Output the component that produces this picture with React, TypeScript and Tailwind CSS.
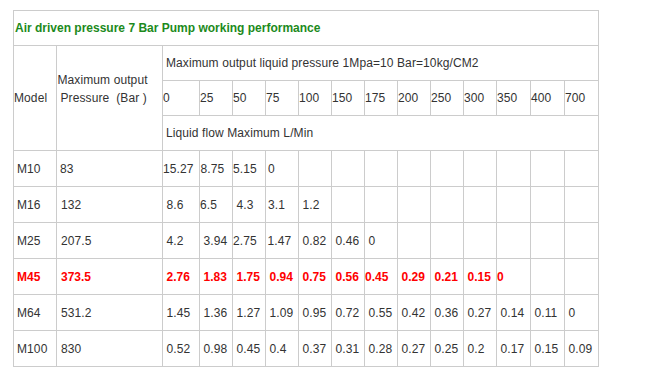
import React from "react";

type Cell = { t: string; p?: string };

const headNums = ["0", "25", "50", "75", "100", "150", "175", "200", "250", "300", "350", "400", "700"];

const rows: { model: string; pres: string; presPad: string; red?: boolean; vals: Cell[] }[] = [
  {
    model: "M10",
    pres: "83",
    presPad: "pl-[3px]",
    vals: [{ t: "15.27", p: "pl-0" }, { t: "8.75", p: "pl-[0.5px]" }, { t: "5.15", p: "pl-0" }, { t: "0", p: "pl-[2px]" }],
  },
  {
    model: "M16",
    pres: "132",
    presPad: "pl-[4px]",
    vals: [{ t: "8.6" }, { t: "6.5", p: "pl-0" }, { t: "4.3" }, { t: "3.1", p: "pl-[2px]" }, { t: "1.2" }],
  },
  {
    model: "M25",
    pres: "207.5",
    presPad: "pl-[4px]",
    vals: [{ t: "4.2" }, { t: "3.94" }, { t: "2.75", p: "pl-0" }, { t: "1.47", p: "pl-[1.5px]" }, { t: "0.82" }, { t: "0.46" }, { t: "0" }],
  },
  {
    model: "M45",
    pres: "373.5",
    presPad: "pl-[4px]",
    red: true,
    vals: [
      { t: "2.76" },
      { t: "1.83" },
      { t: "1.75" },
      { t: "0.94" },
      { t: "0.75" },
      { t: "0.56" },
      { t: "0.45", p: "pl-0" },
      { t: "0.29" },
      { t: "0.21" },
      { t: "0.15" },
      { t: "0", p: "pl-0" },
    ],
  },
  {
    model: "M64",
    pres: "531.2",
    presPad: "pl-[4px]",
    vals: ["1.45", "1.36", "1.27", "1.09", "0.95", "0.72", "0.55", "0.42", "0.36", "0.27", "0.14", "0.11", "0"].map((t) => ({ t })),
  },
  {
    model: "M100",
    pres: "830",
    presPad: "pl-[4px]",
    vals: ["0.52", "0.98", "0.45", "0.4", "0.37", "0.31", "0.28", "0.27", "0.25", "0.2", "0.17", "0.15", "0.09"].map((t) => ({ t })),
  },
];

export default function App() {
  const cell = "bg-white flex items-center whitespace-nowrap";
  return (
    <div className="w-[664px] h-[384px] bg-white" style={{ fontFamily: '"Liberation Sans", Arial, sans-serif' }}>
      <div className="pt-[10px] pl-[13px]">
        <div
          className="inline-grid bg-[#cccccc] border border-[#cccccc] gap-px text-[12px] leading-[18px] tracking-[0.1px] text-[#333333]"
          style={{
            gridTemplateColumns: "42px 105px 36px repeat(9, 32px) repeat(3, 33px)",
            gridTemplateRows: "34px 34px 34px 34px repeat(6, 35px)",
          }}
        >
          <div className={`${cell} col-span-15 pl-[1px] font-bold tracking-normal text-[#1c8a1c]`}>
            Air driven pressure 7 Bar Pump working performance
          </div>
          <div className={`${cell} pl-0`} style={{ gridRow: "2 / span 3", gridColumn: "1" }}>
            Model
          </div>
          <div className={`${cell} flex-col !items-start justify-center pl-[0.5px]`} style={{ gridRow: "2 / span 3", gridColumn: "2" }}>
            <div>Maximum output</div>
            <div className="pl-[3px]">Pressure&nbsp;&nbsp;(Bar )</div>
            <div className="h-[18px]" />
          </div>
          <div className={`${cell} pl-[3px]`} style={{ gridRow: "2", gridColumn: "3 / span 13" }}>
            Maximum output liquid pressure 1Mpa=10 Bar=10kg/CM2
          </div>
          {headNums.map((n, i) => (
            <div key={n} className={`${cell} pl-0`} style={{ gridRow: "3", gridColumn: `${i + 3}` }}>
              {n}
            </div>
          ))}
          <div className={`${cell} pl-[3px]`} style={{ gridRow: "4", gridColumn: "3 / span 13" }}>
            Liquid flow Maximum L/Min
          </div>
          {rows.map((r) => {
            const tc = r.red ? "text-[#ff0000] font-bold tracking-normal" : "";
            return (
              <React.Fragment key={r.model}>
                <div className={`${cell} pl-[3px] ${tc}`}>{r.model}</div>
                <div className={`${cell} ${r.presPad} ${tc}`}>{r.pres}</div>
                {Array.from({ length: 13 }).map((_, i) => {
                  const v = r.vals[i];
                  return (
                    <div key={i} className={`${cell} ${v?.p ?? "pl-[3.5px]"} ${tc}`}>
                      {v ? v.t : ""}
                    </div>
                  );
                })}
              </React.Fragment>
            );
          })}
        </div>
      </div>
    </div>
  );
}
